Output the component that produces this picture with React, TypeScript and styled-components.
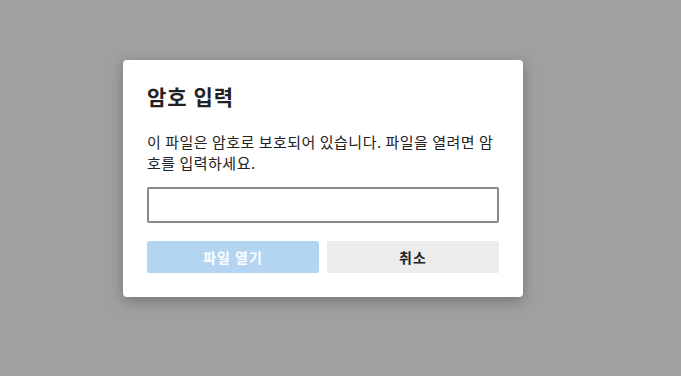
import { type FC } from 'react'
import styled, { createGlobalStyle } from 'styled-components'

const GlobalStyle = createGlobalStyle`
  html, body {
    margin: 0;
    padding: 0;
    height: 100%;
  }
  body {
    font-family: "Noto Sans CJK KR", "Noto Sans", sans-serif;
    background: #a0a0a0;
  }
`

const Overlay = styled.div`
  width: 681px;
  height: 376px;
  background: #a0a0a0;
  padding: 60px 0 0 123px;
  box-sizing: border-box;
`

const Dialog = styled.div`
  width: 400px;
  box-sizing: border-box;
  padding: 24px;
  background: #ffffff;
  border-radius: 4px;
  box-shadow: 0 4px 14px rgba(0, 0, 0, 0.28);
  display: flex;
  flex-direction: column;
`

const Title = styled.h2`
  margin: 0;
  font-size: 21px;
  line-height: 24px;
  letter-spacing: 1px;
  font-weight: 700;
  color: #222222;
`

const Message = styled.p`
  margin: 23px 0 0;
  font-size: 15px;
  line-height: 21px;
  letter-spacing: 0.5px;
  color: #222222;
`

const PasswordInput = styled.input`
  margin-top: 14px;
  height: 36px;
  box-sizing: border-box;
  border: 2px solid #888888;
  border-radius: 2px;
  padding: 0 8px;
  font-size: 14px;
  outline: none;
`

const ButtonRow = styled.div`
  display: grid;
  grid-template-columns: 1fr 1fr;
  gap: 8px;
  margin-top: 18px;
`

const Button = styled.button<{ $primary?: boolean }>`
  height: 32px;
  border: none;
  border-radius: 2px;
  font-family: inherit;
  font-size: 14px;
  letter-spacing: 1px;
  font-weight: 700;
  background: ${(p) => (p.$primary ? '#b3d5f2' : '#ececec')};
  color: ${(p) => (p.$primary ? '#ffffff' : '#222222')};
`

const App: FC = () => (
  <>
    <GlobalStyle />
    <Overlay>
      <Dialog>
        <Title>암호 입력</Title>
        <Message>이 파일은 암호로 보호되어 있습니다. 파일을 열려면 암호를 입력하세요.</Message>
        <PasswordInput type="password" />
        <ButtonRow>
          <Button $primary disabled>
            파일 열기
          </Button>
          <Button>취소</Button>
        </ButtonRow>
      </Dialog>
    </Overlay>
  </>
)

export default App
